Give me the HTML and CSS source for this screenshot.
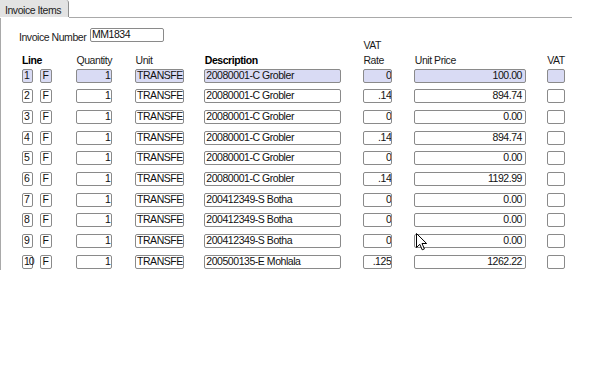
FILE: index.html
```html
<!DOCTYPE html>
<html>
<head>
<meta charset="utf-8">
<link rel="stylesheet" href="styles.css">
</head>
<body>
<div class="tabbar">
  <div class="tab">Invoice Items</div>
  <div class="tab-rest"></div>
</div>
<div class="panel">
  <div class="inv">
    <span class="inv-label">Invoice Number</span>
    <div class="fld inv-fld">MM1834</div>
  </div>
  <div class="grid">
    <div class="hd"><b>Line</b></div>
    <div class="hd"></div>
    <div class="hd">Quantity</div>
    <div class="hd">Unit</div>
    <div class="hd"><b>Description</b></div>
    <div class="hd"><span class="hd-top">VAT</span>Rate</div>
    <div class="hd">Unit Price</div>
    <div class="hd">VAT</div>

    <div><div class="fld line hl">1</div></div><div><div class="fld flag hl">F</div></div><div><div class="fld qty hl">1</div></div><div><div class="fld unit hl">TRANSFE</div></div><div><div class="fld desc hl">20080001-C Grobler</div></div><div><div class="fld rate hl">0</div></div><div><div class="fld price hl">100.00</div></div><div><div class="fld vat hl"></div></div>

    <div><div class="fld line">2</div></div><div><div class="fld flag">F</div></div><div><div class="fld qty">1</div></div><div><div class="fld unit">TRANSFE</div></div><div><div class="fld desc">20080001-C Grobler</div></div><div><div class="fld rate">.14</div></div><div><div class="fld price">894.74</div></div><div><div class="fld vat"></div></div>

    <div><div class="fld line">3</div></div><div><div class="fld flag">F</div></div><div><div class="fld qty">1</div></div><div><div class="fld unit">TRANSFE</div></div><div><div class="fld desc">20080001-C Grobler</div></div><div><div class="fld rate">0</div></div><div><div class="fld price">0.00</div></div><div><div class="fld vat"></div></div>

    <div><div class="fld line">4</div></div><div><div class="fld flag">F</div></div><div><div class="fld qty">1</div></div><div><div class="fld unit">TRANSFE</div></div><div><div class="fld desc">20080001-C Grobler</div></div><div><div class="fld rate">.14</div></div><div><div class="fld price">894.74</div></div><div><div class="fld vat"></div></div>

    <div><div class="fld line">5</div></div><div><div class="fld flag">F</div></div><div><div class="fld qty">1</div></div><div><div class="fld unit">TRANSFE</div></div><div><div class="fld desc">20080001-C Grobler</div></div><div><div class="fld rate">0</div></div><div><div class="fld price">0.00</div></div><div><div class="fld vat"></div></div>

    <div><div class="fld line">6</div></div><div><div class="fld flag">F</div></div><div><div class="fld qty">1</div></div><div><div class="fld unit">TRANSFE</div></div><div><div class="fld desc">20080001-C Grobler</div></div><div><div class="fld rate">.14</div></div><div><div class="fld price">1192.99</div></div><div><div class="fld vat"></div></div>

    <div><div class="fld line">7</div></div><div><div class="fld flag">F</div></div><div><div class="fld qty">1</div></div><div><div class="fld unit">TRANSFE</div></div><div><div class="fld desc">200412349-S Botha</div></div><div><div class="fld rate">0</div></div><div><div class="fld price">0.00</div></div><div><div class="fld vat"></div></div>

    <div><div class="fld line">8</div></div><div><div class="fld flag">F</div></div><div><div class="fld qty">1</div></div><div><div class="fld unit">TRANSFE</div></div><div><div class="fld desc">200412349-S Botha</div></div><div><div class="fld rate">0</div></div><div><div class="fld price">0.00</div></div><div><div class="fld vat"></div></div>

    <div><div class="fld line">9</div></div><div><div class="fld flag">F</div></div><div><div class="fld qty">1</div></div><div><div class="fld unit">TRANSFE</div></div><div><div class="fld desc">200412349-S Botha</div></div><div><div class="fld rate">0</div></div><div><div class="fld price">0.00</div></div><div><div class="fld vat"></div></div>

    <div><div class="fld line">10</div></div><div><div class="fld flag">F</div></div><div><div class="fld qty">1</div></div><div><div class="fld unit">TRANSFE</div></div><div><div class="fld desc">200500135-E Mohlala</div></div><div><div class="fld rate">.125</div></div><div><div class="fld price">1262.22</div></div><div><div class="fld vat"></div></div>
  </div>
</div>
<svg class="cursor" width="12" height="18" viewBox="0 0 12 18"><path d="M0.5 0.5 V14.5 L3.8 11.3 L6.2 16.8 L8.4 15.9 L6 10.5 H10.6 Z" fill="#fff" stroke="#000" stroke-width="1" stroke-linejoin="miter"/></svg>
</body>
</html>
```
FILE: styles.css
```css
html, body {
  margin: 0;
  padding: 0;
}
body {
  position: relative;
  width: 600px;
  height: 375px;
  overflow: hidden;
  background: #fff;
  font-family: "Liberation Sans", Arial, sans-serif;
  font-size: 10.5px;
  letter-spacing: -0.45px;
  color: #111;
}
.tabbar {
  display: flex;
  height: 18px;
}
.tab {
  box-sizing: border-box;
  width: 69px;
  height: 17px;
  padding: 4px 0 0 5px;
  line-height: 12px;
  background: #e3e3e3;
  border-right: 1px solid #8f8f8f;
  border-top-right-radius: 3px;
  color: #222;
  white-space: nowrap;
}
.tab-rest {
  width: 503px;
  height: 17px;
  border-bottom: 1px solid #a9a9a9;
}
.panel {
  box-sizing: border-box;
  width: 600px;
  height: 252px;
  border-left: 1px solid #a9a9a9;
  padding-left: 18px;
}
.inv {
  display: flex;
  align-items: flex-start;
  padding-top: 10px;
  height: 9.5px;
}
.inv-label {
  width: 71px;
  margin-top: 3px;
  line-height: 12px;
  color: #222;
  white-space: nowrap;
}
.grid {
  margin-left: 2.5px;
  display: grid;
  grid-template-columns: 18.5px 36px 59px 69.3px 158.7px 51.3px 132.4px 20px;
  grid-template-rows: 31px;
  grid-auto-rows: 20.7px;
}
.hd {
  display: flex;
  flex-direction: column;
  justify-content: flex-end;
  padding: 0 0 3px 0.5px;
  line-height: 12px;
  color: #1a1a1a;
  white-space: nowrap;
}
.hd b {
  color: #000;
}
.hd-top {
  margin-bottom: 3px;
}
.fld {
  box-sizing: border-box;
  height: 14px;
  border: 1px solid #8a8a8a;
  border-radius: 2px;
  background: #fff;
  line-height: 10.5px;
  white-space: nowrap;
  overflow: hidden;
  color: #111;
}
.hl {
  background: #d9dbf4;
}
.inv-fld {
  width: 73.5px;
  padding-left: 1px;
}
.line {
  width: 11.5px;
  padding-left: 1.5px;
  letter-spacing: -1.2px;
  overflow: visible;
}
.flag {
  width: 11.5px;
  padding-left: 1.5px;
}
.qty {
  width: 36.3px;
  text-align: right;
  padding-right: 1px;
}
.unit {
  width: 49px;
  padding-left: 1px;
}
.desc {
  width: 136.7px;
  padding-left: 1px;
}
.rate {
  width: 29.3px;
  text-align: right;
  padding-right: 0;
}
.price {
  width: 111.7px;
  text-align: right;
  padding-right: 3px;
}
.vat {
  width: 18.5px;
}
.cursor {
  position: absolute;
  left: 416px;
  top: 233px;
}
```
